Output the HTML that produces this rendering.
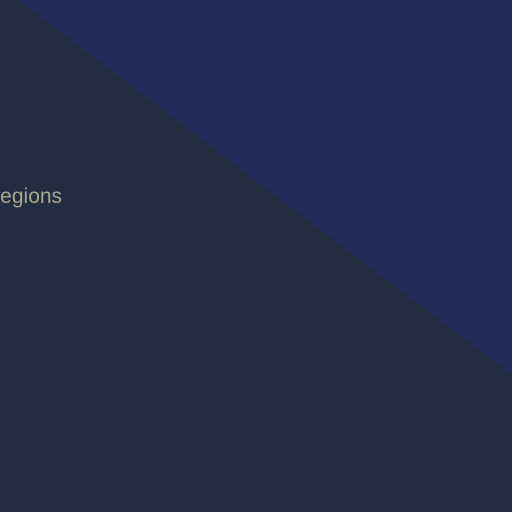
<!DOCTYPE html>
<html><head><style>
html,body{margin:0;padding:0;width:512px;height:512px;overflow:hidden;background:#222d42;}
svg{position:absolute;left:0;top:0}
.t{position:absolute;left:-15px;top:185px;font-family:"Liberation Sans",sans-serif;font-size:21px;color:#a9a78f;white-space:nowrap}
</style></head><body>
<svg width="512" height="512"><polygon points="18,0 512,0 512,375" fill="#222d5a"/></svg>
<div class="t">Regions</div>
</body></html>
